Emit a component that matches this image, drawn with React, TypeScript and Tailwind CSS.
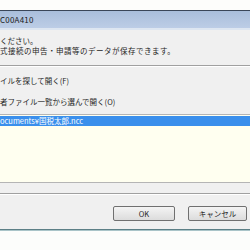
import React from "react";

export default function App() {
  const jp = { fontFamily: '"Noto Sans CJK JP", "Noto Sans", sans-serif' };
  return (
    <div
      className="w-[250px] h-[250px] bg-white flex flex-col overflow-hidden text-[#1e1e1e]"
      style={jp}
    >
      <div className="h-[10px] bg-[#fdfdfb] shrink-0" />
      <div className="h-[1px] bg-[#3a4658] shrink-0" />
      {/* title bar */}
      <div className="h-[17px] shrink-0 bg-gradient-to-b from-[#a9bedb] to-[#bccde6] flex items-center">
        <span className="text-[8px] leading-none text-[#1a1a1a] tracking-[0.2px]">C00A410</span>
      </div>
      <div className="h-[2px] shrink-0 bg-[#dde6f1]" />
      {/* body */}
      <div className="h-[199px] shrink-0 bg-[#f0f0f0] flex flex-col">
        <div className="pt-[6px] text-[7.5px] leading-[9.5px] whitespace-nowrap">
          <div>ください。</div>
          <div className="tracking-[0.5px]">式接続の申告・申請等のデータが保存できます。</div>
        </div>
        <div className="mt-[10px] h-[1px] bg-[#a0a0a0]" />
        <div className="h-[1px] bg-white" />
        <div className="mt-[9px] text-[7.5px] leading-[9px] whitespace-nowrap">
          <div>イルを探して開く(F)</div>
          <div className="mt-[12px]">者ファイル一覧から選んで開く(O)</div>
        </div>
        {/* list box */}
        <div className="mt-[8px] h-[69px] flex flex-col border-t border-b border-[#b5b5b5] bg-[#fffff0]">
          <div className="mt-[1px] h-[10px] bg-[#3a8fec] text-white text-[7.5px] leading-[10px] whitespace-nowrap">
            ocuments¥国税太郎.ncc
          </div>
        </div>
        <div className="mt-[10px] h-[1px] bg-[#a0a0a0]" />
        <div className="h-[1px] bg-white" />
        <div className="mt-[11px] flex">
          <button className="ml-[113px] w-[62px] h-[15px] border border-[#707070] rounded-[2px] bg-gradient-to-b from-[#f4f4f4] to-[#dcdcdc] text-[7.5px] leading-none flex items-center justify-center">
            OK
          </button>
          <button className="ml-[13px] w-[59px] h-[15px] border border-[#707070] rounded-[2px] bg-gradient-to-b from-[#f4f4f4] to-[#dcdcdc] text-[7.5px] leading-none flex items-center justify-center">
            キャンセル
          </button>
        </div>
      </div>
      <div className="h-[1px] shrink-0 bg-[#5c7f86]" />
      <div className="h-[1px] shrink-0 bg-[#a9c4c8]" />
      <div className="flex-1 bg-[#fcfdfb]" />
    </div>
  );
}
